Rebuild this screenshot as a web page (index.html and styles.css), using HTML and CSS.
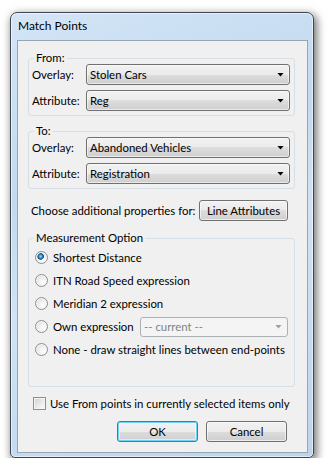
FILE: index.html
```html
<!DOCTYPE html>
<html>
<head>
<meta charset="utf-8">
<title>Match Points</title>
<link rel="stylesheet" href="styles.css">
</head>
<body>
<div class="window">
  <div class="titlebar">Match Points</div>
  <div class="client">
    <fieldset class="group group-pair">
      <legend>From:</legend>
      <div class="field-row">
        <span class="field-label">Overlay:</span>
        <div class="combo"><span class="combo-text">Stolen Cars</span><span class="arrow"></span></div>
      </div>
      <div class="field-row">
        <span class="field-label">Attribute:</span>
        <div class="combo"><span class="combo-text">Reg</span><span class="arrow"></span></div>
      </div>
    </fieldset>
    <fieldset class="group group-pair group-to">
      <legend>To:</legend>
      <div class="field-row">
        <span class="field-label">Overlay:</span>
        <div class="combo"><span class="combo-text">Abandoned Vehicles</span><span class="arrow"></span></div>
      </div>
      <div class="field-row">
        <span class="field-label">Attribute:</span>
        <div class="combo"><span class="combo-text">Registration</span><span class="arrow"></span></div>
      </div>
    </fieldset>
    <div class="props-row">
      <span>Choose additional properties for:</span>
      <div class="btn btn-line">Line Attributes</div>
    </div>
    <fieldset class="group group-measure">
      <legend>Measurement Option</legend>
      <div class="radio-row"><span class="radio checked"></span><span>Shortest Distance</span></div>
      <div class="radio-row"><span class="radio"></span><span>ITN Road Speed expression</span></div>
      <div class="radio-row"><span class="radio"></span><span>Meridian 2 expression</span></div>
      <div class="radio-row"><span class="radio"></span><span>Own expression</span>
        <div class="combo combo-disabled"><span class="combo-text">-- current --</span><span class="arrow"></span></div>
      </div>
      <div class="radio-row"><span class="radio"></span><span>None - draw straight lines between end-points</span></div>
    </fieldset>
    <div class="check-row"><span class="checkbox"></span><span>Use From points in currently selected items only</span></div>
    <div class="button-row">
      <div class="btn btn-dialog btn-default">OK</div>
      <div class="btn btn-dialog">Cancel</div>
    </div>
  </div>
</div>
</body>
</html>
```
FILE: styles.css
```css
* { box-sizing: border-box; }
html, body { margin: 0; padding: 0; background: #fff; }
body {
  font-family: Lato, "Liberation Sans", sans-serif;
  font-size: 11.4px;
  color: #000;
  padding: 12px 0 0 10px;
}
.window {
  width: 304px;
  height: 446px;
  border: 1px solid #3f464e;
  border-radius: 7px 7px 5px 5px;
  background: linear-gradient(160deg, #d3e5f6 0%, #c2d9f0 35%, #d0e3f5 55%, #bcd4ee 100%);
  box-shadow: inset 0 0 0 1px rgba(255,255,255,0.55), 2px 3px 9px 1px rgba(0,0,0,0.55);
  padding: 0 5px 4px 6px;
  display: flex;
  flex-direction: column;
}
.titlebar {
  height: 27px;
  padding: 5px 0 0 1px;
  line-height: 15px;
  font-size: 12px;
  color: #000;
}
.client {
  height: 413px;
  border: 1px solid #98a5b2;
  background: #f0f0f0;
  display: flex;
  flex-direction: column;
}
.group {
  margin: 0 12px 0 10px;
  border: 1px solid #d5dfe5;
  border-radius: 3px;
  min-inline-size: 0;
}
.group legend {
  padding: 0 2px;
  line-height: 12px;
}
.group-pair {
  margin-top: 11px;
  padding: 0 4px 4px 3px;
}
.group-pair legend { margin-left: 2px; }
.group-to { margin-top: 9px; }
.field-row {
  display: flex;
  align-items: center;
  height: 21px;
}
.field-row + .field-row { margin-top: 5px; }
.field-label { width: 54px; flex: none; }
.combo {
  flex: 1;
  height: 21px;
  border: 1px solid #707070;
  border-radius: 3px;
  background: linear-gradient(#f2f2f2 0%, #ebebeb 50%, #dddddd 50%, #cfcfcf 100%);
  box-shadow: inset 0 0 0 1px rgba(255,255,255,0.55);
  display: flex;
  align-items: center;
  padding: 0 5px 0 3px;
  white-space: nowrap;
}
.combo-text { flex: 1; }
.arrow {
  width: 7px;
  height: 4px;
  background: #000;
  clip-path: polygon(0 0, 100% 0, 50% 100%);
  flex: none;
}
.props-row {
  display: flex;
  align-items: center;
  margin-top: 11px;
  padding: 0 19px 0 13px;
  height: 21px;
  white-space: nowrap;
}
.btn {
  height: 21px;
  border: 1px solid #707070;
  border-radius: 3px;
  background: linear-gradient(#f2f2f2 0%, #ebebeb 50%, #dddddd 50%, #cfcfcf 100%);
  box-shadow: inset 0 0 0 1px rgba(255,255,255,0.6);
  text-align: center;
  line-height: 19px;
  white-space: nowrap;
}
.btn-line { width: 89px; margin-left: auto; }
.group-measure {
  margin-top: 11px;
  padding: 2px 6px 25px 6px;
}
.group-measure legend { margin-left: -1px; }
.radio-row {
  display: flex;
  align-items: center;
  height: 23px;
  white-space: nowrap;
}
.radio {
  width: 13px;
  height: 13px;
  border-radius: 50%;
  border: 1px solid #8e8f8f;
  background: radial-gradient(circle at 65% 65%, #ffffff 0, #f2f2f2 35%, #d6d6d6 100%);
  box-shadow: inset 0 0 0 1px #f6f6f6;
  margin-right: 5px;
  flex: none;
}
.radio.checked {
  background:
    radial-gradient(circle at 42% 40%, #9fd6f6 0, #3d95d0 1.6px, #0f4f86 3px, rgba(15,79,134,0) 3.6px),
    radial-gradient(circle at 65% 65%, #ffffff 0, #f2f2f2 35%, #d6d6d6 100%);
}
.combo-disabled {
  flex: none;
  width: 148px;
  height: 20px;
  margin-left: auto;
  border-color: #adb2b5;
  background: #f4f4f4;
  box-shadow: none;
  color: #838383;
}
.combo-disabled .arrow { background: #a0a0a0; }
.check-row {
  display: flex;
  align-items: center;
  height: 15px;
  margin-top: 9px;
  padding-left: 15px;
  white-space: nowrap;
}
.checkbox {
  width: 13px;
  height: 13px;
  border: 1px solid #8e8f8f;
  background: linear-gradient(135deg, #cdd0d4 0%, #eceded 60%, #fbfbfb 100%);
  box-shadow: inset 0 0 0 1px #f4f4f4;
  margin-right: 4px;
  flex: none;
}
.button-row {
  display: flex;
  justify-content: flex-end;
  gap: 8px;
  margin-top: 10px;
  padding-right: 20px;
}
.btn-dialog { width: 81px; }
.btn-default {
  border-color: #3c7fb1;
  box-shadow: inset 0 0 0 1px #6fd2f7, inset 0 0 0 2px rgba(255,255,255,0.5);
}
```
